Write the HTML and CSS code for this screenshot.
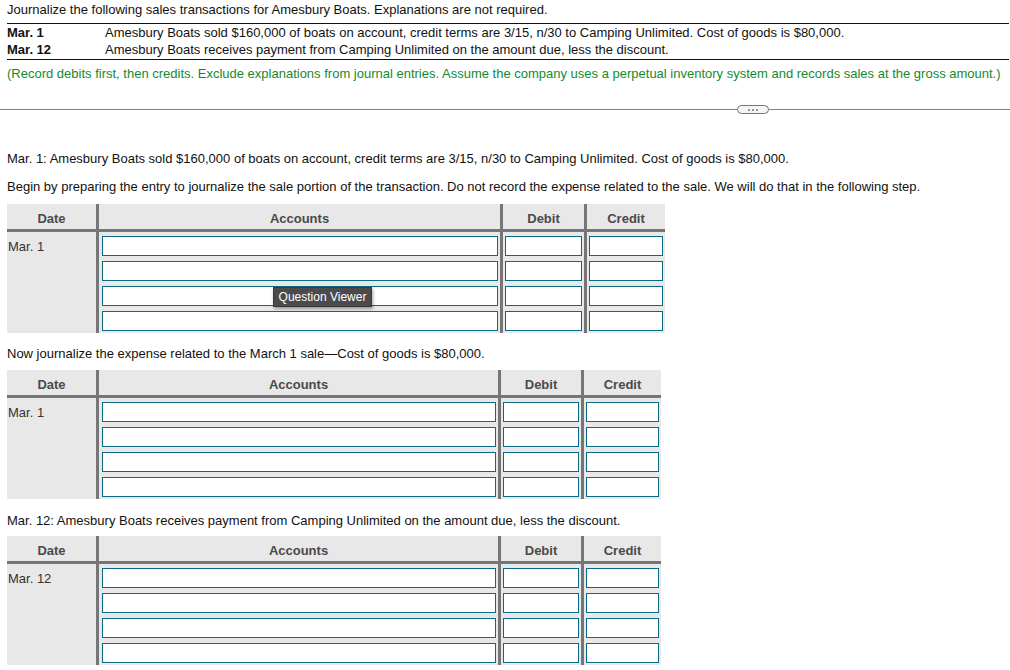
FILE: index.html
```html
<!DOCTYPE html>
<html>
<head>
<meta charset="utf-8">
<link rel="stylesheet" href="styles.css">
</head>
<body>
<div class="top">
  <p class="lead">Journalize the following sales transactions for Amesbury Boats. Explanations are not required.</p>
  <div class="tx">
    <div class="tx-row"><span class="tx-date">Mar. 1</span><span>Amesbury Boats sold $160,000 of boats on account, credit terms are 3/15, n/30 to Camping Unlimited. Cost of goods is $80,000.</span></div>
    <div class="tx-row"><span class="tx-date">Mar. 12</span><span>Amesbury Boats receives payment from Camping Unlimited on the amount due, less the discount.</span></div>
  </div>
  <p class="note">(Record debits first, then credits. Exclude explanations from journal entries. Assume the company uses a perpetual inventory system and records sales at the gross amount.)</p>
</div>

<div class="divider">
  <div class="div-left"></div>
  <div class="pill"><span></span><span></span><span></span></div>
  <div class="div-right"></div>
</div>

<div class="content">
  <p class="step s1">Mar. 1: Amesbury Boats sold $160,000 of boats on account, credit terms are 3/15, n/30 to Camping Unlimited. Cost of goods is $80,000.</p>
  <p class="step s2">Begin by preparing the entry to journalize the sale portion of the transaction. Do not record the expense related to the sale. We will do that in the following step.</p>

  <div class="journal j1">
    <div class="hd">Date</div>
    <div class="hd">Accounts</div>
    <div class="hd">Debit</div>
    <div class="hd">Credit</div>
    <div class="bd date">Mar. 1</div>
    <div class="bd acc"><div class="in"></div><div class="in"></div><div class="in"></div><div class="in"></div></div>
    <div class="bd amt"><div class="in"></div><div class="in"></div><div class="in"></div><div class="in"></div></div>
    <div class="bd amt"><div class="in"></div><div class="in"></div><div class="in"></div><div class="in"></div></div>
    <div class="tooltip">Question Viewer</div>
  </div>

  <p class="step s3">Now journalize the expense related to the March 1 sale—Cost of goods is $80,000.</p>

  <div class="journal j2">
    <div class="hd">Date</div>
    <div class="hd">Accounts</div>
    <div class="hd">Debit</div>
    <div class="hd">Credit</div>
    <div class="bd date">Mar. 1</div>
    <div class="bd acc"><div class="in"></div><div class="in"></div><div class="in"></div><div class="in"></div></div>
    <div class="bd amt"><div class="in"></div><div class="in"></div><div class="in"></div><div class="in"></div></div>
    <div class="bd amt"><div class="in"></div><div class="in"></div><div class="in"></div><div class="in"></div></div>
  </div>

  <p class="step s4">Mar. 12: Amesbury Boats receives payment from Camping Unlimited on the amount due, less the discount.</p>

  <div class="journal j2">
    <div class="hd">Date</div>
    <div class="hd">Accounts</div>
    <div class="hd">Debit</div>
    <div class="hd">Credit</div>
    <div class="bd date">Mar. 12</div>
    <div class="bd acc"><div class="in"></div><div class="in"></div><div class="in"></div><div class="in"></div></div>
    <div class="bd amt"><div class="in"></div><div class="in"></div><div class="in"></div><div class="in"></div></div>
    <div class="bd amt"><div class="in"></div><div class="in"></div><div class="in"></div><div class="in"></div></div>
  </div>
</div>
</body>
</html>
```

FILE: styles.css
```css
html, body {
  margin: 0;
  padding: 0;
  background: #fff;
}
body {
  font-family: "Liberation Sans", Arial, Helvetica, sans-serif;
  font-size: 13px;
  line-height: 15px;
  color: #111;
  overflow: hidden;
}
p { margin: 0; }

.top {
  padding: 2px 1px 0 7px;
}
.lead {
  margin-bottom: 6px;
}
.tx {
  border-top: 1px solid #111;
  border-bottom: 1px solid #111;
  padding-bottom: 1px;
}
.tx-row {
  display: flex;
  height: 17px;
  align-items: center;
}
.tx-date {
  font-weight: bold;
  width: 98px;
  flex: none;
}
.note {
  color: #138a2e;
  margin-top: 6px;
}

.divider {
  display: flex;
  align-items: center;
  margin-top: 24px;
  height: 9px;
}
.div-left {
  width: 737px;
  height: 1px;
  background: #7a8190;
}
.div-right {
  flex: 1;
  height: 1px;
  background: #7a8190;
}
.pill {
  box-sizing: border-box;
  width: 32px;
  height: 9px;
  border: 1px solid #6f7685;
  border-radius: 5px;
  background: #f4f5f7;
  display: flex;
  align-items: center;
  justify-content: center;
  gap: 2px;
}
.pill span {
  width: 2px;
  height: 2px;
  background: #6f7685;
  border-radius: 1px;
}

.content {
  padding-left: 7px;
}
.s1 { margin-top: 37px; }
.s2 { margin-top: 13px; margin-bottom: 10px; }
.s3 { margin-top: 13px; margin-bottom: 9px; }
.s4 { margin-top: 14px; margin-bottom: 8px; }

.journal {
  position: relative;
  display: grid;
  grid-template-columns: 89px 401px 81px 78px;
  grid-template-rows: 25px auto;
  column-gap: 3px;
  row-gap: 3px;
  background: #767676;
  width: max-content;
}
.j2 {
  grid-template-columns: 89px 399px 80px 77px;
}
.hd {
  background: #e8e8e8;
  font-weight: bold;
  color: #4a4a4a;
  text-align: center;
  padding-top: 4px;
  line-height: 21px;
}
.bd {
  background: #e8e8e8;
  padding: 4px 2px 2px 2px;
  display: flex;
  flex-direction: column;
  gap: 5px;
}
.bd.date {
  padding: 7px 1px 0 1px;
  color: #333;
  display: block;
}
.bd.acc {
  padding-left: 3px;
}
.in {
  box-sizing: border-box;
  height: 20px;
  background: #fff;
  border: 1px solid #0b6a88;
}

.tooltip {
  position: absolute;
  left: 266px;
  top: 83px;
  box-sizing: border-box;
  width: 99px;
  height: 20px;
  background: #4b4b4b;
  border: 1px solid #3a3a3a;
  color: #fff;
  font-size: 12px;
  line-height: 18px;
  text-align: center;
  box-shadow: 1px 2px 3px rgba(0,0,0,0.35);
}
```
